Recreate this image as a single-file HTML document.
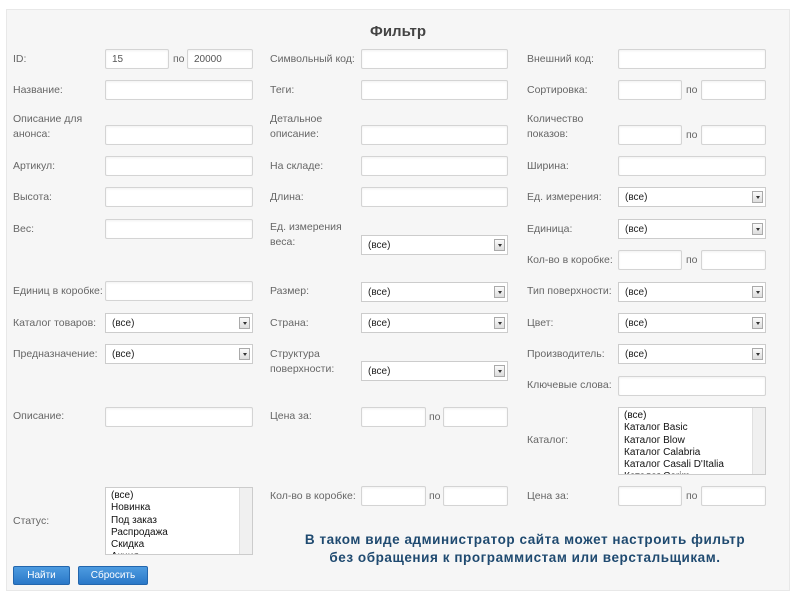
<!DOCTYPE html>
<html><head><meta charset="utf-8"><style>
body{margin:0;width:796px;height:600px;background:#fff;font-family:"Liberation Sans",sans-serif;position:relative;overflow:hidden}
.p{position:absolute;left:6px;top:9px;width:784px;height:582px;background:#f6f6f6;border:1px solid #e8e8e8;box-sizing:border-box}
.l{position:absolute;font-size:10.5px;color:#666;line-height:15px;white-space:nowrap}
.i{position:absolute;height:20px;background:#fff;border:1px solid #d4d4d4;border-radius:2px;box-sizing:border-box;box-shadow:inset 0 1px 2px rgba(0,0,0,.06);font-size:10px;color:#555;padding:4px 6px;line-height:11px}
.s{position:absolute;height:20px;background:#fff;border:1px solid #ccc;box-sizing:border-box;font-family:"Liberation Sans",sans-serif;font-size:10px;color:#222;padding:4px 6px;line-height:12px}
.s:after{content:"";position:absolute;right:2px;top:3px;width:11px;height:12px;border:1px solid #aaa;box-sizing:border-box;background:linear-gradient(#fafafa,#ddd)}
.s:before{content:"";position:absolute;right:5px;top:8px;border:2.5px solid transparent;border-top:3px solid #333;z-index:1}
.po{position:absolute;font-size:10.5px;color:#666}
.lb{position:absolute;background:#fff;border:1px solid #ccc;box-sizing:border-box;font-family:"Liberation Sans",sans-serif;font-size:10px;color:#111;line-height:12.3px;padding:2px 5px;overflow:hidden}
.sb{position:absolute;right:0;top:0;bottom:0;width:12px;background:#f0f0f0;border-left:1px solid #e0e0e0}
.btn{position:absolute;top:566px;height:19px;background:linear-gradient(#4d9be0,#2a78c8);border:1px solid #2366ad;border-radius:2px;color:#fff;font-size:10px;line-height:18px;text-align:center;box-sizing:border-box}
</style></head><body>
<div class="p"></div>
<div style="position:absolute;left:0;width:796px;top:23px;text-align:center;font-family:'Liberation Sans',sans-serif;font-weight:bold;font-size:15px;color:#444">Фильтр</div>

<!-- column 1 -->
<div class="l" style="left:13px;top:52px">ID:</div>
<div class="i" style="left:105px;top:49px;width:64px">15</div><div class="po" style="left:173px;top:53px">по</div><div class="i" style="left:187px;top:49px;width:66px">20000</div>
<div class="l" style="left:13px;top:83px">Название:</div><div class="i" style="left:105px;top:80px;width:148px"></div>
<div class="l" style="left:13px;top:112px">Описание для<br>анонса:</div><div class="i" style="left:105px;top:125px;width:148px"></div>
<div class="l" style="left:13px;top:159px">Артикул:</div><div class="i" style="left:105px;top:156px;width:148px"></div>
<div class="l" style="left:13px;top:190px">Высота:</div><div class="i" style="left:105px;top:187px;width:148px"></div>
<div class="l" style="left:13px;top:222px">Вес:</div><div class="i" style="left:105px;top:219px;width:148px"></div>
<div class="l" style="left:13px;top:284px">Единиц в коробке:</div><div class="i" style="left:105px;top:281px;width:148px"></div>
<div class="l" style="left:13px;top:316px">Каталог товаров:</div><div class="s" style="left:105px;top:313px;width:148px">(все)</div>
<div class="l" style="left:13px;top:347px">Предназначение:</div><div class="s" style="left:105px;top:344px;width:148px">(все)</div>
<div class="l" style="left:13px;top:409px">Описание:</div><div class="i" style="left:105px;top:407px;width:148px"></div>
<div class="l" style="left:13px;top:514px">Статус:</div>
<div class="lb" style="left:105px;top:487px;width:148px;height:68px">(все)<br>Новинка<br>Под заказ<br>Распродажа<br>Скидка<br>Акция<div class="sb"></div></div>

<!-- column 2 -->
<div class="l" style="left:270px;top:52px">Символьный код:</div><div class="i" style="left:361px;top:49px;width:147px"></div>
<div class="l" style="left:270px;top:83px">Теги:</div><div class="i" style="left:361px;top:80px;width:147px"></div>
<div class="l" style="left:270px;top:112px">Детальное<br>описание:</div><div class="i" style="left:361px;top:125px;width:147px"></div>
<div class="l" style="left:270px;top:159px">На складе:</div><div class="i" style="left:361px;top:156px;width:147px"></div>
<div class="l" style="left:270px;top:190px">Длина:</div><div class="i" style="left:361px;top:187px;width:147px"></div>
<div class="l" style="left:270px;top:220px">Ед. измерения<br>веса:</div><div class="s" style="left:361px;top:235px;width:147px">(все)</div>
<div class="l" style="left:270px;top:284px">Размер:</div><div class="s" style="left:361px;top:282px;width:147px">(все)</div>
<div class="l" style="left:270px;top:316px">Страна:</div><div class="s" style="left:361px;top:313px;width:147px">(все)</div>
<div class="l" style="left:270px;top:347px">Структура<br>поверхности:</div><div class="s" style="left:361px;top:361px;width:147px">(все)</div>
<div class="l" style="left:270px;top:409px">Цена за:</div>
<div class="i" style="left:361px;top:407px;width:65px"></div><div class="po" style="left:429px;top:411px">по</div><div class="i" style="left:443px;top:407px;width:65px"></div>
<div class="l" style="left:270px;top:489px">Кол-во в коробке:</div>
<div class="i" style="left:361px;top:486px;width:65px"></div><div class="po" style="left:429px;top:490px">по</div><div class="i" style="left:443px;top:486px;width:65px"></div>

<!-- column 3 -->
<div class="l" style="left:527px;top:52px">Внешний код:</div><div class="i" style="left:618px;top:49px;width:148px"></div>
<div class="l" style="left:527px;top:83px">Сортировка:</div>
<div class="i" style="left:618px;top:80px;width:64px"></div><div class="po" style="left:686px;top:84px">по</div><div class="i" style="left:701px;top:80px;width:65px"></div>
<div class="l" style="left:527px;top:112px">Количество<br>показов:</div>
<div class="i" style="left:618px;top:125px;width:64px"></div><div class="po" style="left:686px;top:129px">по</div><div class="i" style="left:701px;top:125px;width:65px"></div>
<div class="l" style="left:527px;top:159px">Ширина:</div><div class="i" style="left:618px;top:156px;width:148px"></div>
<div class="l" style="left:527px;top:190px">Ед. измерения:</div><div class="s" style="left:618px;top:187px;width:148px">(все)</div>
<div class="l" style="left:527px;top:222px">Единица:</div><div class="s" style="left:618px;top:219px;width:148px">(все)</div>
<div class="l" style="left:527px;top:253px">Кол-во в коробке:</div>
<div class="i" style="left:618px;top:250px;width:64px"></div><div class="po" style="left:686px;top:254px">по</div><div class="i" style="left:701px;top:250px;width:65px"></div>
<div class="l" style="left:527px;top:284px">Тип поверхности:</div><div class="s" style="left:618px;top:282px;width:148px">(все)</div>
<div class="l" style="left:527px;top:316px">Цвет:</div><div class="s" style="left:618px;top:313px;width:148px">(все)</div>
<div class="l" style="left:527px;top:347px">Производитель:</div><div class="s" style="left:618px;top:344px;width:148px">(все)</div>
<div class="l" style="left:527px;top:378px">Ключевые слова:</div><div class="i" style="left:618px;top:376px;width:148px"></div>
<div class="l" style="left:527px;top:433px">Каталог:</div>
<div class="lb" style="left:618px;top:407px;width:148px;height:68px">(все)<br>Каталог Basic<br>Каталог Blow<br>Каталог Calabria<br>Каталог Casali D'Italia<br>Каталог Cerim<div class="sb"></div></div>
<div class="l" style="left:527px;top:489px">Цена за:</div>
<div class="i" style="left:618px;top:486px;width:64px"></div><div class="po" style="left:686px;top:490px">по</div><div class="i" style="left:701px;top:486px;width:65px"></div>

<div style="position:absolute;left:270px;width:510px;top:531px;text-align:center;font-family:'Liberation Sans',sans-serif;font-weight:bold;font-size:13.5px;letter-spacing:.55px;line-height:18px;color:#1f4a70">В таком виде администратор сайта может настроить фильтр<br>без обращения к программистам или верстальщикам.</div>

<div class="btn" style="left:13px;width:57px">Найти</div>
<div class="btn" style="left:78px;width:70px">Сбросить</div>
</body></html>
